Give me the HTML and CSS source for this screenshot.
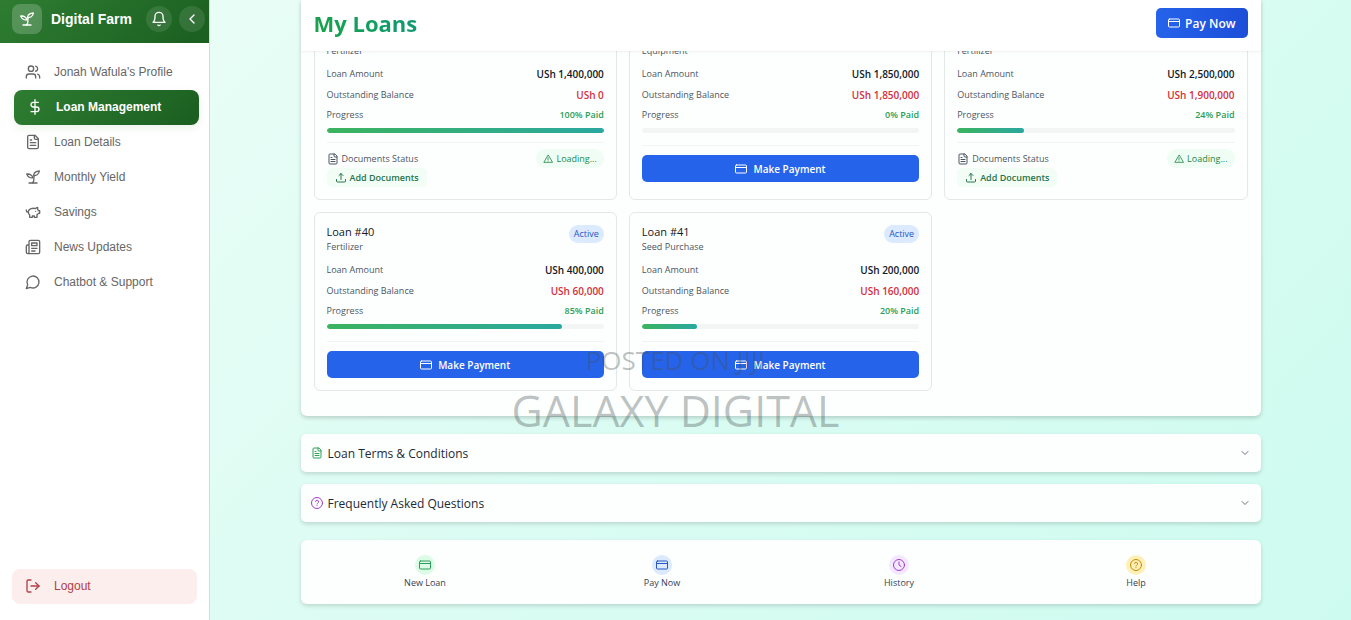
FILE: index.html
```html
<!doctype html>
<html lang="en">

<head>
  <meta charset="UTF-8" />
  <meta name="viewport" content="width=device-width, initial-scale=1.0">
  <title>Digital Farm - My Loans</title>
  <link rel="stylesheet" href="styles.css">
</head>

<body>
  <svg class="icon-defs" aria-hidden="true">
    <symbol id="sprout" viewBox="0 0 24 24">
      <path d="M6 21h12" />
      <path d="M11 21c4.500-3 .8-7 3-11" />
      <path d="M9.5 9.4c1.1.8 1.8 2.2 2.300 3.700-2 .4-3.500.4-4.800-.3-1.700-.9-3.300-2.400-4.500-5.300 3-.3 5.500.7 7 1.900z" />
      <path d="M14.100 6a7 7 0 0 0-1.100 4c1.900-.1 3.800-.6 5.300-1.400 1.600-1 3-2.800 3.200-5.600-3.200.1-6 1-7.400 3z" />
    </symbol>
    <symbol id="bell" viewBox="0 0 24 24">
      <path d="M6 8a6 6 0 0 1 12 0c0 7 3 9 3 9H3s3-2 3-9" />
      <path d="M10.3 21a1.94 1.94 0 0 0 3.4 0" />
    </symbol>
    <symbol id="chevron-left" viewBox="0 0 24 24"><path d="m15 18-6-6 6-6" /></symbol>
    <symbol id="chevron-down" viewBox="0 0 24 24"><path d="m6 9 6 6 6-6" /></symbol>
    <symbol id="users" viewBox="0 0 24 24">
      <path d="M16 21v-2a4 4 0 0 0-4-4H6a4 4 0 0 0-4 4v2" />
      <circle cx="9" cy="7" r="4" />
      <path d="M22 21v-2a4 4 0 0 0-3-3.87" />
      <path d="M16 3.13a4 4 0 0 1 0 7.75" />
    </symbol>
    <symbol id="dollar" viewBox="0 0 24 24">
      <path d="M12 1v22" />
      <path d="M17 5H9.5a3.5 3.5 0 0 0 0 7h5a3.5 3.5 0 0 1 0 7H6" />
    </symbol>
    <symbol id="file-text" viewBox="0 0 24 24">
      <path d="M15 2H6a2 2 0 0 0-2 2v16a2 2 0 0 0 2 2h12a2 2 0 0 0 2-2V7z" />
      <path d="M14 2v4a2 2 0 0 0 2 2h4" />
      <path d="M10 9H8" />
      <path d="M16 13H8" />
      <path d="M16 17H8" />
    </symbol>
    <symbol id="piggy" viewBox="0 0 24 24">
      <path d="M19 5c-1.5 0-2.8 1.4-3 2-3.5-1.5-11-.3-11 5 0 1.8 0 3 2 4.5V20h4v-2h3v2h4v-4c1-.5 1.7-1 2-2h2v-4h-2c0-1-.5-1.5-1-2V5z" />
      <path d="M2 9v1c0 1.1.9 2 2 2h1" />
      <path d="M16 11h.01" />
    </symbol>
    <symbol id="newspaper" viewBox="0 0 24 24">
      <path d="M4 22h16a2 2 0 0 0 2-2V4a2 2 0 0 0-2-2H8a2 2 0 0 0-2 2v16a2 2 0 0 1-2 2zm0 0a2 2 0 0 1-2-2v-9c0-1.1.9-2 2-2h2" />
      <path d="M18 14h-8" />
      <path d="M15 18h-5" />
      <path d="M10 6h8v4h-8z" />
    </symbol>
    <symbol id="chat" viewBox="0 0 24 24"><path d="M7.9 20A9 9 0 1 0 4 16.1L2 22z" /></symbol>
    <symbol id="logout" viewBox="0 0 24 24">
      <path d="M9 21H5a2 2 0 0 1-2-2V5a2 2 0 0 1 2-2h4" />
      <path d="m16 17 5-5-5-5" />
      <path d="M21 12H9" />
    </symbol>
    <symbol id="card" viewBox="0 0 24 24">
      <rect x="1" y="4" width="22" height="16" rx="2" />
      <path d="M1 9h22" />
    </symbol>
    <symbol id="warning" viewBox="0 0 24 24">
      <path d="M12 3 2 20h20z" />
      <path d="M12 9v5" />
      <path d="M12 17h.01" />
    </symbol>
    <symbol id="upload" viewBox="0 0 24 24">
      <path d="M3 15v3a2 2 0 0 0 2 2h14a2 2 0 0 0 2-2v-3" />
      <path d="m8 7 4-4 4 4" />
      <path d="M12 3v12" />
    </symbol>
    <symbol id="question" viewBox="0 0 24 24">
      <circle cx="12" cy="12" r="11" />
      <path d="M9 9a3 3 0 0 1 6 1c0 2-3 2.500-3 4" />
      <path d="M12 17h.01" />
    </symbol>
    <symbol id="clock" viewBox="0 0 24 24">
      <circle cx="12" cy="12" r="11" />
      <path d="M12 6v6l4 3" />
    </symbol>
  </svg>

  <div class="app">
    <aside class="sidebar">
      <header class="brand">
        <span class="brand-logo"><svg class="icon"><use href="#sprout" /></svg></span>
        <span class="brand-name">Digital Farm</span>
        <button class="round-btn" aria-label="Notifications"><svg class="icon"><use href="#bell" /></svg></button>
        <button class="round-btn" aria-label="Collapse menu"><svg class="icon"><use href="#chevron-left" /></svg></button>
      </header>
      <nav class="menu">
        <a href="#" class="menu-item"><svg class="icon"><use href="#users" /></svg>Jonah Wafula's Profile</a>
        <a href="#" class="menu-item active"><svg class="icon"><use href="#dollar" /></svg>Loan Management</a>
        <a href="#" class="menu-item"><svg class="icon"><use href="#file-text" /></svg>Loan Details</a>
        <a href="#" class="menu-item"><svg class="icon"><use href="#sprout" /></svg>Monthly Yield</a>
        <a href="#" class="menu-item"><svg class="icon"><use href="#piggy" /></svg>Savings</a>
        <a href="#" class="menu-item"><svg class="icon"><use href="#newspaper" /></svg>News Updates</a>
        <a href="#" class="menu-item"><svg class="icon"><use href="#chat" /></svg>Chatbot &amp; Support</a>
      </nav>
      <button class="menu-item logout"><svg class="icon"><use href="#logout" /></svg>Logout</button>
    </aside>

    <main class="content">
      <div class="container">
        <section class="panel">
          <header class="panel-header">
            <h1>My Loans</h1>
            <button class="pay-btn"><svg class="icon"><use href="#card" /></svg>Pay Now</button>
          </header>

          <div class="loans">
            <article class="loan">
              <div class="loan-head"><p class="loan-type">Fertilizer</p></div>
              <div class="row"><span>Loan Amount</span><b>USh 1,400,000</b></div>
              <div class="row"><span>Outstanding Balance</span><b class="due">USh 0</b></div>
              <div class="row progress-row"><span>Progress</span><b>100% Paid</b></div>
              <div class="bar"><div class="fill" style="width: 100%"></div></div>
              <div class="docs">
                <div class="docs-row">
                  <span class="docs-label"><svg class="icon"><use href="#file-text" /></svg>Documents Status</span>
                  <span class="docs-status"><svg class="icon"><use href="#warning" /></svg>Loading...</span>
                </div>
                <button class="docs-btn"><svg class="icon"><use href="#upload" /></svg>Add Documents</button>
              </div>
            </article>

            <article class="loan">
              <div class="loan-head"><p class="loan-type">Equipment</p></div>
              <div class="row"><span>Loan Amount</span><b>USh 1,850,000</b></div>
              <div class="row"><span>Outstanding Balance</span><b class="due">USh 1,850,000</b></div>
              <div class="row progress-row"><span>Progress</span><b>0% Paid</b></div>
              <div class="bar"><div class="fill" style="width: 0%"></div></div>
              <div class="actions">
                <button class="make-btn"><svg class="icon"><use href="#card" /></svg>Make Payment</button>
              </div>
            </article>

            <article class="loan">
              <div class="loan-head"><p class="loan-type">Fertilizer</p></div>
              <div class="row"><span>Loan Amount</span><b>USh 2,500,000</b></div>
              <div class="row"><span>Outstanding Balance</span><b class="due">USh 1,900,000</b></div>
              <div class="row progress-row"><span>Progress</span><b>24% Paid</b></div>
              <div class="bar"><div class="fill" style="width: 24%"></div></div>
              <div class="docs">
                <div class="docs-row">
                  <span class="docs-label"><svg class="icon"><use href="#file-text" /></svg>Documents Status</span>
                  <span class="docs-status"><svg class="icon"><use href="#warning" /></svg>Loading...</span>
                </div>
                <button class="docs-btn"><svg class="icon"><use href="#upload" /></svg>Add Documents</button>
              </div>
            </article>

            <article class="loan">
              <div class="loan-head">
                <div>
                  <h2>Loan #40</h2>
                  <p class="loan-type">Fertilizer</p>
                </div>
                <span class="badge">Active</span>
              </div>
              <div class="row"><span>Loan Amount</span><b>USh 400,000</b></div>
              <div class="row"><span>Outstanding Balance</span><b class="due">USh 60,000</b></div>
              <div class="row progress-row"><span>Progress</span><b>85% Paid</b></div>
              <div class="bar"><div class="fill" style="width: 85%"></div></div>
              <div class="actions">
                <button class="make-btn"><svg class="icon"><use href="#card" /></svg>Make Payment</button>
              </div>
            </article>

            <article class="loan">
              <div class="loan-head">
                <div>
                  <h2>Loan #41</h2>
                  <p class="loan-type">Seed Purchase</p>
                </div>
                <span class="badge">Active</span>
              </div>
              <div class="row"><span>Loan Amount</span><b>USh 200,000</b></div>
              <div class="row"><span>Outstanding Balance</span><b class="due">USh 160,000</b></div>
              <div class="row progress-row"><span>Progress</span><b>20% Paid</b></div>
              <div class="bar"><div class="fill" style="width: 20%"></div></div>
              <div class="actions">
                <button class="make-btn"><svg class="icon"><use href="#card" /></svg>Make Payment</button>
              </div>
            </article>
          </div>
        </section>

        <section class="accordions">
          <button class="accordion" aria-expanded="false">
            <svg class="icon green"><use href="#file-text" /></svg>
            <span>Loan Terms &amp; Conditions</span>
            <svg class="icon arrow"><use href="#chevron-down" /></svg>
          </button>
          <button class="accordion" aria-expanded="false">
            <svg class="icon purple"><use href="#question" /></svg>
            <span>Frequently Asked Questions</span>
            <svg class="icon arrow"><use href="#chevron-down" /></svg>
          </button>
        </section>

        <nav class="quick">
          <a href="#"><span class="dot green"><svg class="icon"><use href="#card" /></svg></span>New Loan</a>
          <a href="#"><span class="dot blue"><svg class="icon"><use href="#card" /></svg></span>Pay Now</a>
          <a href="#"><span class="dot purple"><svg class="icon"><use href="#clock" /></svg></span>History</a>
          <a href="#"><span class="dot yellow"><svg class="icon"><use href="#question" /></svg></span>Help</a>
        </nav>
      </div>
    </main>
  </div>

  <div class="watermark">
    <p class="watermark-small">POSTED ON JIJI</p>
    <p class="watermark-big">GALAXY DIGITAL</p>
  </div>
</body>

</html>
```

FILE: styles.css
```css
* {
  box-sizing: border-box;
}

body {
  margin: 0;
  font-family: "Open Sans", "Noto Sans", sans-serif;
  font-size: 9px;
  color: #4b5563;
}

h1,
h2,
p {
  margin: 0;
}

button {
  font-family: inherit;
  border: none;
  cursor: pointer;
}

a {
  text-decoration: none;
}

.icon-defs {
  display: none;
}

.icon {
  width: 12px;
  height: 12px;
  flex: none;
  fill: none;
  stroke: currentColor;
  stroke-width: 2;
  stroke-linecap: round;
  stroke-linejoin: round;
}

.app {
  display: flex;
  height: 100vh;
  overflow: hidden;
}

/* sidebar */
.sidebar {
  width: 210px;
  flex: none;
  display: flex;
  flex-direction: column;
  background-color: #fff;
  border-right: 1px solid #d5dbd8;
  font-family: "Liberation Sans", Arial, sans-serif;
}

.brand {
  display: flex;
  align-items: center;
  gap: 7px;
  padding: 0 4px 5px 12px;
  height: 43px;
  color: #fff;
  background: linear-gradient(135deg, #2e7d32, #1b5e20);
}

.brand-logo {
  display: grid;
  place-items: center;
  width: 30px;
  height: 30px;
  border-radius: 8px;
  background-color: rgba(255, 255, 255, 0.2);
}

.brand-logo .icon,
.round-btn .icon {
  width: 16px;
  height: 16px;
}

.brand-name {
  flex: 1;
  padding-left: 2px;
  font-size: 14px;
  font-weight: bold;
  white-space: nowrap;
}

.round-btn {
  display: grid;
  place-items: center;
  width: 26px;
  height: 26px;
  padding: 0;
  border-radius: 50%;
  color: #fff;
  background-color: rgba(255, 255, 255, 0.1);
}

.menu {
  display: flex;
  flex-direction: column;
  padding: 12px 10px 0 14px;
}

.menu-item {
  display: flex;
  align-items: center;
  gap: 13px;
  height: 35px;
  padding: 0 11px 1px;
  border-radius: 8px;
  font-size: 12px;
  color: #666;
}

.menu-item .icon {
  width: 16px;
  height: 16px;
}

.menu-item.active {
  padding-left: 13px;
  font-weight: bold;
  color: #fff;
  background: linear-gradient(135deg, #2e7d32, #1b5e20);
  box-shadow: 0 3px 8px rgba(46, 125, 50, 0.1);
}

.logout {
  margin: auto 12px 16px;
  padding-left: 13px;
  color: #b04048;
  background-color: #fdeeee;
}

/* main */
.content {
  flex: 1;
  overflow: hidden;
  background: linear-gradient(135deg, #e8fdf6, #dafcf2 50%, #cefbf0);
}

.container {
  max-width: 960px;
  margin: 0 auto;
}

.panel {
  padding-bottom: 25px;
  border-radius: 0 0 6px 6px;
  background-color: #fcfffe;
  box-shadow: 0 2px 4px rgba(0, 0, 0, 0.18);
}

.panel-header {
  position: sticky;
  top: 0;
  z-index: 1;
  display: flex;
  justify-content: space-between;
  align-items: center;
  height: 51px;
  padding: 0 13px 5px;
  background-color: #fff;
  box-shadow: 0 1px 2px rgba(0, 0, 0, 0.06);
}

.panel-header h1 {
  font-size: 22px;
  line-height: 30px;
  background: linear-gradient(90deg, #16a34a, #0d9488);
  background-size: 160px 100%;
  -webkit-background-clip: text;
  background-clip: text;
  color: transparent;
}

.pay-btn {
  display: flex;
  align-items: center;
  gap: 5px;
  height: 30px;
  padding: 0 12px;
  border-radius: 5px;
  font-size: 12px;
  font-weight: 600;
  color: #fff;
  background: linear-gradient(90deg, #2563eb, #1d4ed8);
}

/* the list is scrolled up under the header */
.loans {
  display: grid;
  grid-template-columns: repeat(3, 1fr);
  gap: 12px;
  margin-top: -35px;
  padding: 0 13px;
}

.loan {
  padding: 12px;
  border: 1px solid #e3e8e6;
  border-radius: 6px;
  background-color: #fdfffe;
}

.loan-head {
  display: flex;
  justify-content: space-between;
  height: 29px;
  margin-bottom: 8px;
}

.loan-head > .loan-type {
  align-self: flex-end;
}

.loan-head h2 {
  font-size: 11px;
  font-weight: 500;
  line-height: 14px;
  color: #111827;
}

.loan-type {
  font-size: 9px;
  line-height: 15px;
}

.badge {
  height: 18px;
  padding: 0 5px;
  border-radius: 9px;
  line-height: 18px;
  font-weight: 500;
  color: #2a56c4;
  background-color: #dbeafe;
}

.row {
  display: flex;
  justify-content: space-between;
  height: 16px;
  margin-bottom: 5px;
  line-height: 16px;
}

.row b {
  font-size: 10px;
  font-weight: 600;
  color: #111827;
}

.row .due {
  color: #d32f3c;
}

.progress-row {
  margin-top: -1px;
}

.progress-row b {
  font-size: 9px;
  font-weight: 600;
  color: #2a9d58;
}

.bar {
  height: 5px;
  border-radius: 3px;
  overflow: hidden;
  background-color: #f3f5f5;
}

.fill {
  height: 100%;
  border-radius: 3px;
  background: linear-gradient(90deg, #3bb35f, #2ba8a0);
}

.actions {
  margin-top: 12px;
  padding-top: 9px;
  border-top: 1px solid #f1f4f3;
}

.make-btn {
  display: flex;
  align-items: center;
  justify-content: center;
  gap: 6px;
  width: 100%;
  height: 27px;
  border-radius: 5px;
  font-size: 10px;
  font-weight: 600;
  color: #fff;
  background-color: #2563eb;
}

.docs {
  margin-top: 9px;
  padding-top: 6px;
  border-top: 1px solid #f1f4f3;
}

.docs-row {
  display: flex;
  justify-content: space-between;
  height: 19px;
}

.docs-label,
.docs-status,
.docs-btn {
  display: flex;
  align-items: center;
  gap: 3px;
}

.docs-status {
  padding: 0 7px;
  border-radius: 10px;
  font-weight: 500;
  color: #23894a;
  background-color: #f0fdf4;
}

.docs-status .icon {
  width: 10px;
  height: 10px;
}

.docs-btn {
  height: 19px;
  padding: 0 8px;
  border-radius: 6px;
  font-size: 9px;
  font-weight: 600;
  color: #26744a;
  background-color: #f2fdf6;
}

/* terms and faq */
.accordions {
  display: flex;
  flex-direction: column;
  gap: 12px;
  margin: 18px 0;
}

.accordion {
  display: flex;
  align-items: center;
  gap: 5px;
  width: 100%;
  height: 38px;
  padding: 0 10px;
  border-radius: 5px;
  font-size: 12px;
  font-weight: 500;
  color: #1f2937;
  background-color: #fcfffe;
  box-shadow: 0 2px 4px rgba(0, 0, 0, 0.15);
}

.accordion span {
  flex: 1;
  text-align: left;
}

.accordion .arrow {
  color: #6b7280;
}

.green {
  color: #2f9e5b;
}

.purple {
  color: #a13fc4;
}

/* quick actions */
.quick {
  display: grid;
  grid-template-columns: repeat(4, 1fr);
  padding: 15px 6px 13px;
  border-radius: 6px;
  background-color: #fcfffe;
  box-shadow: 0 2px 4px rgba(0, 0, 0, 0.15);
}

.quick a {
  display: flex;
  flex-direction: column;
  align-items: center;
  line-height: 16px;
  font-weight: 500;
  color: #374151;
}

.dot {
  display: grid;
  place-items: center;
  width: 20px;
  height: 20px;
  border-radius: 50%;
}

.dot.green {
  background-color: #dcfce7;
}

.dot.blue {
  color: #2a56c4;
  background-color: #dbeafe;
}

.dot.purple {
  background-color: #f3e8ff;
}

.dot.yellow {
  color: #ca8a04;
  background-color: #fef0b8;
}

/* watermark */
.watermark {
  position: absolute;
  top: 343px;
  left: 0;
  right: 0;
  z-index: 2;
  text-align: center;
  color: rgba(70, 80, 80, 0.35);
  pointer-events: none;
}

.watermark-small {
  font-size: 26px;
  line-height: 34px;
}

.watermark-big {
  font-size: 43px;
  line-height: 68px;
}
```
